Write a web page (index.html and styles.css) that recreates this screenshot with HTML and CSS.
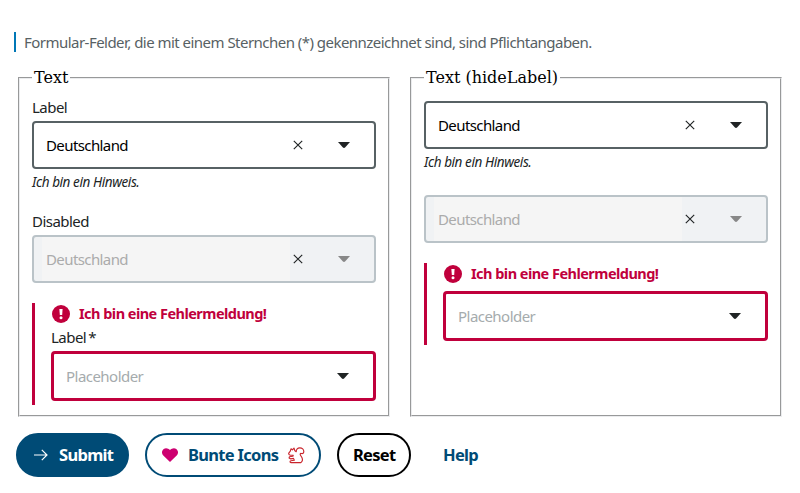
FILE: index.html
```html
<!DOCTYPE html>
<html lang="de">
<head>
<meta charset="utf-8">
<title>Formular</title>
<link rel="stylesheet" href="styles.css">
</head>
<body>
<svg width="0" height="0" class="sprite" aria-hidden="true">
  <symbol id="cross" viewBox="0 0 10 10"><path d="M.8.8l8.4 8.4M9.2.8L.8 9.2" fill="none" stroke="currentColor" stroke-width="1.15"/></symbol>
  <symbol id="caret" viewBox="0 0 12 6"><path d="M0 0h12L7.3 5.3Q6 6.6 4.7 5.3z" fill="currentColor"/></symbol>
  <symbol id="alert" viewBox="0 0 18 18"><circle cx="9" cy="9" r="9" fill="currentColor"/><path d="M7.400 4h3.200l-.4 6H7.800z" fill="#fff"/><circle cx="9" cy="12.700" r="1.500" fill="#fff"/></symbol>
</svg>
<p class="notice">Formular-Felder, die mit einem Sternchen (*) gekennzeichnet sind, sind Pflichtangaben.</p>
<form>
  <div class="columns">
    <fieldset>
      <legend>Text</legend>
      <div class="label first">Label</div>
      <div class="select"><span class="value">Deutschland</span><svg class="cross"><use href="#cross"/></svg><svg class="caret"><use href="#caret"/></svg></div>
      <div class="hint">Ich bin ein Hinweis.</div>
      <div class="label second">Disabled</div>
      <div class="select disabled"><span class="value">Deutschland</span><svg class="cross"><use href="#cross"/></svg><svg class="caret"><use href="#caret"/></svg></div>
      <div class="error">
        <div class="message"><svg><use href="#alert"/></svg><span>Ich bin eine Fehlermeldung!</span></div>
        <div class="label">Label<span class="star">*</span></div>
        <div class="select invalid"><span class="value">Placeholder</span><svg class="caret"><use href="#caret"/></svg></div>
      </div>
    </fieldset>
    <fieldset>
      <legend>Text (hideLabel)</legend>
      <div class="select top"><span class="value">Deutschland</span><svg class="cross"><use href="#cross"/></svg><svg class="caret"><use href="#caret"/></svg></div>
      <div class="hint">Ich bin ein Hinweis.</div>
      <div class="select disabled spaced"><span class="value">Deutschland</span><svg class="cross"><use href="#cross"/></svg><svg class="caret"><use href="#caret"/></svg></div>
      <div class="error">
        <div class="message"><svg><use href="#alert"/></svg><span>Ich bin eine Fehlermeldung!</span></div>
        <div class="select invalid"><span class="value">Placeholder</span><svg class="caret"><use href="#caret"/></svg></div>
      </div>
    </fieldset>
  </div>
  <div class="actions">
    <button type="button" class="btn primary"><svg width="14" height="12" viewBox="0 0 14 12"><path d="M0 6h13M7.800.8L13 6l-5.200 5.200" fill="none" stroke="currentColor" stroke-width="1.2"/></svg><span>Submit</span></button>
    <button type="button" class="btn secondary"><svg width="16" height="14" viewBox="0 0 16 14"><path d="M8 14L1.300 7.600C-.7 5.600-.3 2.400 1.700.9 3.700-.5 6.200.1 8 2.100 9.800.1 12.300-.5 14.300.9c2 1.500 2.400 4.700.4 6.700z" fill="#cd0070"/></svg><span>Bunte Icons</span><svg width="17" height="17" viewBox="0 0 17 17"><path d="M.6 6.300L2.300 4.200 3 1.800l1.400 1L6 1.200l.9 2.600 1.300.9C8.200 2.400 9.600.8 11.800.8c2.400 0 4 1.800 4 3.800 0 1.500-1 2.300-2.300 1.900-1.200-.4-1.700.6-1 1.700l1.400 2.300c1 2 .2 4.100-1 5.100H3c-1.300 0-1.300-1.700 0-1.900l3.300-.4-.8-1.900-2.700.5-1.700-1 .3-1.100 3.500-.5.300-1.100H2.400C1.200 8.200.6 7.300.6 6.300z" fill="none" stroke="#c9252c" stroke-width="1.150" stroke-linejoin="round"/></svg></button>
    <button type="button" class="btn tertiary"><span>Reset</span></button>
    <button type="button" class="btn ghost"><span>Help</span></button>
  </div>
</form>
</body>
</html>
```

FILE: styles.css
```css
* { box-sizing: border-box; }
body {
  margin: 0;
  padding: 32px 16px 0 14px;
  background: #fff;
  color: #202425;
  font: 15px/20px "Noto Sans", "Open Sans", sans-serif;
  letter-spacing: -0.53px;
}
.sprite { position: absolute; }
.notice {
  margin: 0;
  height: 20px;
  padding-left: 8px;
  border-left: 2px solid #0077b6;
  color: #576164;
}
form { padding-left: 2px; }
.columns {
  display: grid;
  grid-template-columns: 1fr 1fr;
  gap: 16px;
  margin-top: 14px;
}
fieldset {
  min-width: 0;
  height: 349px;
  margin: 2px;
  padding: 0 12px;
  border: 2px groove rgb(235, 236, 238);
}
legend {
  padding: 0 2px;
  font: 16px/19px "DejaVu Serif", serif;
  letter-spacing: 0;
  color: #000;
}
.label { height: 20px; margin-bottom: 4px; }
.label.first { margin-top: 10px; }
.label.second { margin-top: 19px; }
.star { margin-left: 2px; }
.select {
  display: flex;
  align-items: center;
  height: 48px;
  padding: 0 24px 0 12px;
  border: 2px solid #576164;
  border-radius: 4px;
  color: #000;
}
.select.top { margin-top: 14px; }
.select.spaced { margin-top: 23px; }
.value { flex: 1; letter-spacing: -0.6px; }
svg { flex: none; }
.cross { width: 10px; height: 10px; margin-right: 35px; color: #202425; }
.caret { width: 12px; height: 6px; color: #202425; }
.hint { height: 20px; margin-top: 3px; font-size: 13.500px; font-style: italic; letter-spacing: -0.42px; }
.disabled {
  border-color: #bac3c8;
  background: linear-gradient(90deg, #f0f2f4 8px, #f5f5f5 8px calc(100% - 84px), #f0f2f4 calc(100% - 84px));
  color: #ababab;
}
.disabled .caret { color: #888; }
.error {
  margin-top: 20px;
  padding: 0 0 4px 16px;
  border-left: 3px solid #c0003c;
}
.message {
  display: flex;
  align-items: center;
  gap: 9px;
  height: 22px;
  padding-left: 1px;
  color: #c0003c;
  font-size: 14.500px;
  font-weight: 700;
}
.message span { margin-top: -3px; }
.message svg { width: 18px; height: 18px; }
.error .label { margin: 2px 0 4px; }
.message + .select { margin-top: 6px; }
.invalid { height: 50px; border: 3px solid #c0003c; color: #a5abad; }
.invalid .value { letter-spacing: -0.53px; }
.actions { display: flex; gap: 16px; margin-top: 14px; }
.btn {
  display: flex;
  align-items: center;
  height: 44px;
  padding: 0 15px;
  border: 2px solid #004b76;
  border-radius: 22px;
  background: #fff;
  color: #004b76;
  font: inherit;
  font-size: 16.500px;
  font-weight: 700;
  letter-spacing: -0.7px;
  white-space: nowrap;
}
.primary { width: 113px; gap: 11px; padding-left: 16px; background: #004b76; color: #fff; }
.secondary { width: 176px; gap: 10px; }
.tertiary { width: 74px; padding: 0 14px; border-color: #000; color: #000; }
.ghost { padding-left: 14px; border-color: transparent; }
```
